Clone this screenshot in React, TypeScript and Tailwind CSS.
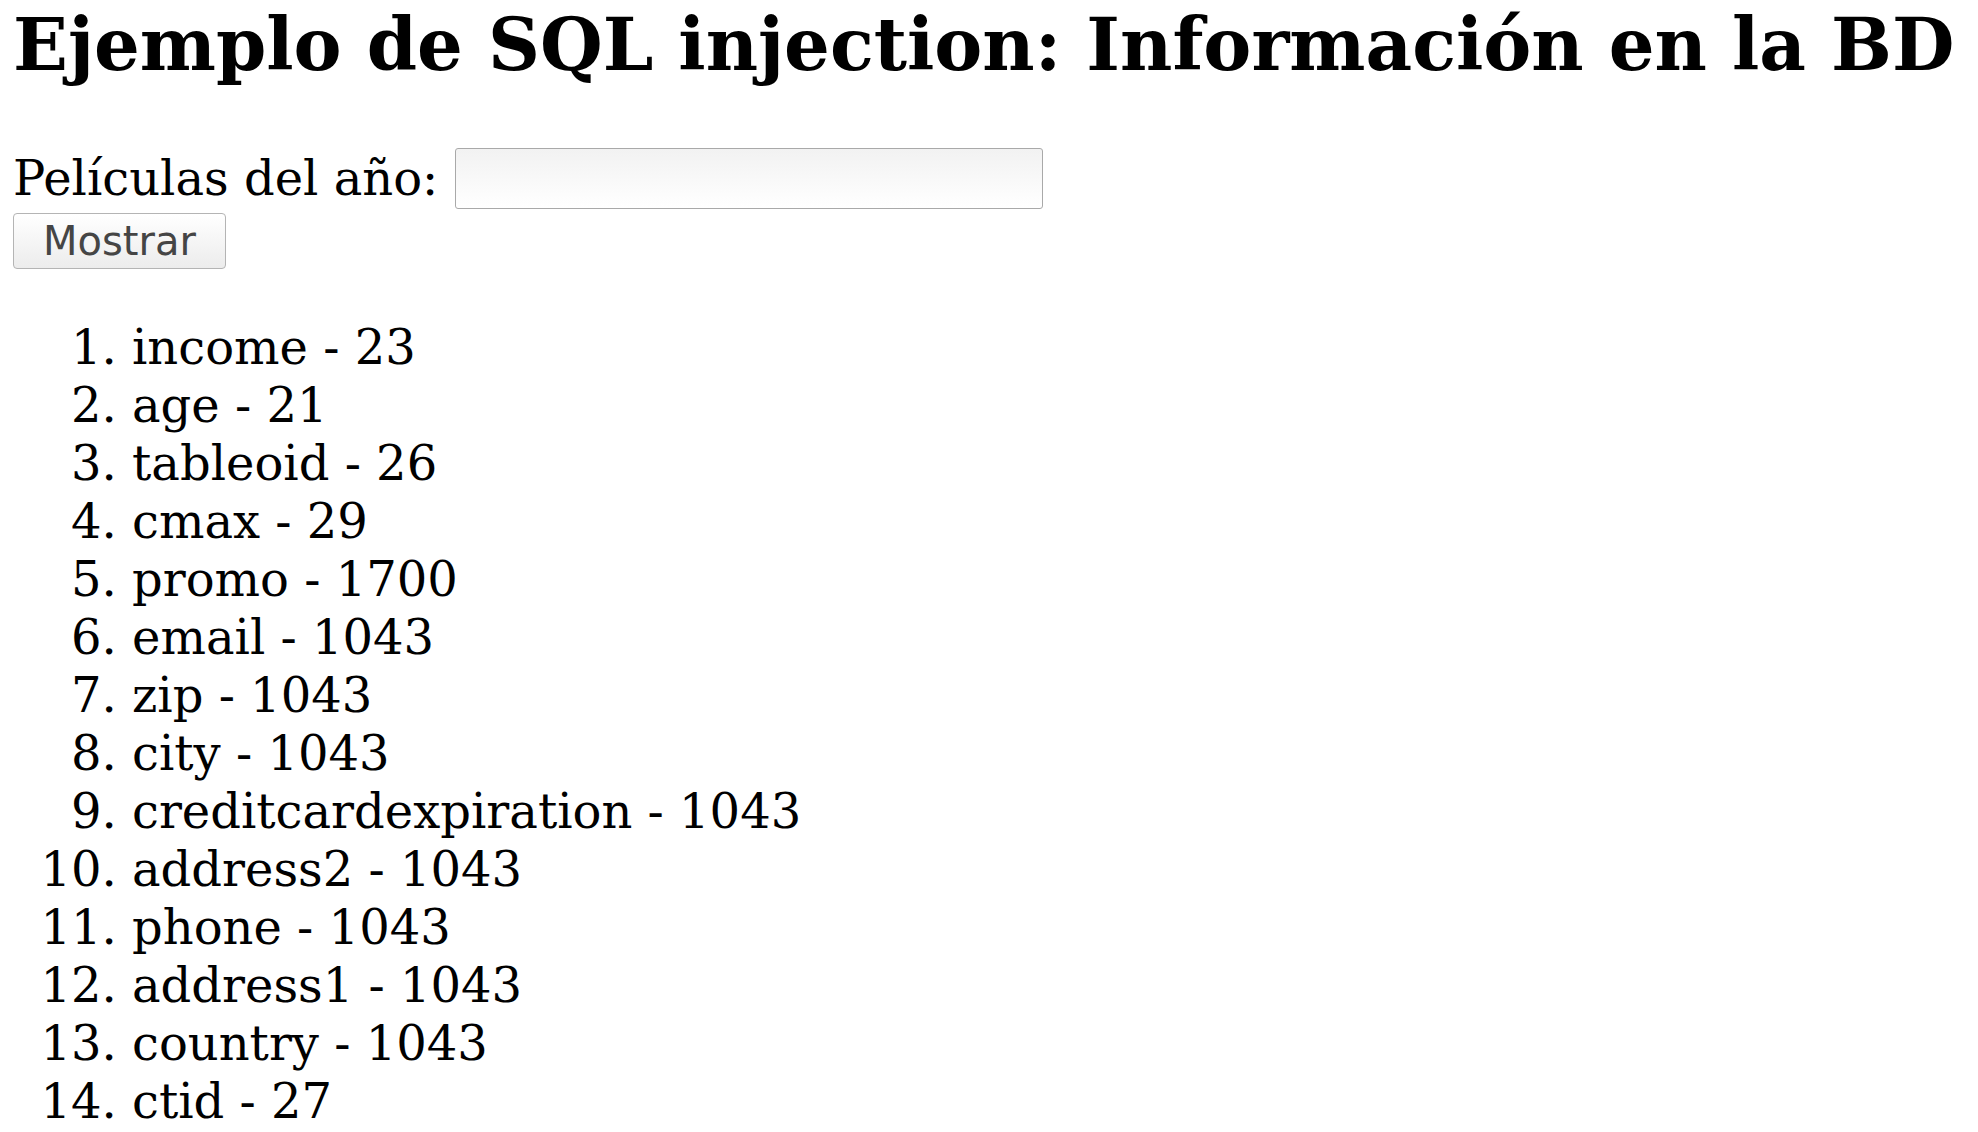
import React from "react";

const items: [string, string][] = [
  ["income", "23"],
  ["age", "21"],
  ["tableoid", "26"],
  ["cmax", "29"],
  ["promo", "1700"],
  ["email", "1043"],
  ["zip", "1043"],
  ["city", "1043"],
  ["creditcardexpiration", "1043"],
  ["address2", "1043"],
  ["phone", "1043"],
  ["address1", "1043"],
  ["country", "1043"],
  ["ctid", "27"],
];

export default function App() {
  return (
    <div className="min-h-screen bg-white text-black pl-[13px] pt-[5px] font-['DejaVu_Serif',serif]">
      <h1 className="m-0 text-[72px] font-bold leading-[80px] whitespace-nowrap">
        Ejemplo de SQL injection: Información en la BD
      </h1>
      <div className="mt-[63px] flex items-center">
        <span className="text-[48px] leading-[53px] whitespace-nowrap">Películas del año:</span>
        <input
          type="text"
          className="ml-[17px] h-[61px] w-[588px] rounded-[3px] border border-[#a9a9a9] bg-linear-to-b from-[#f2f2f2] to-white outline-none"
        />
      </div>
      <button className="mt-[4px] block h-[56px] rounded-[4px] border border-[#b4b4b4] bg-linear-to-b from-white to-[#ececec] px-[29px] text-[40px] leading-[46px] text-[#454545] font-['DejaVu_Sans',sans-serif]">
        Mostrar
      </button>
      <ol className="mt-[49px] list-decimal pl-[119px] text-[48px] leading-[58px]">
        {items.map(([n, v]) => (
          <li key={n}>
            {n} - {v}
          </li>
        ))}
      </ol>
    </div>
  );
}
